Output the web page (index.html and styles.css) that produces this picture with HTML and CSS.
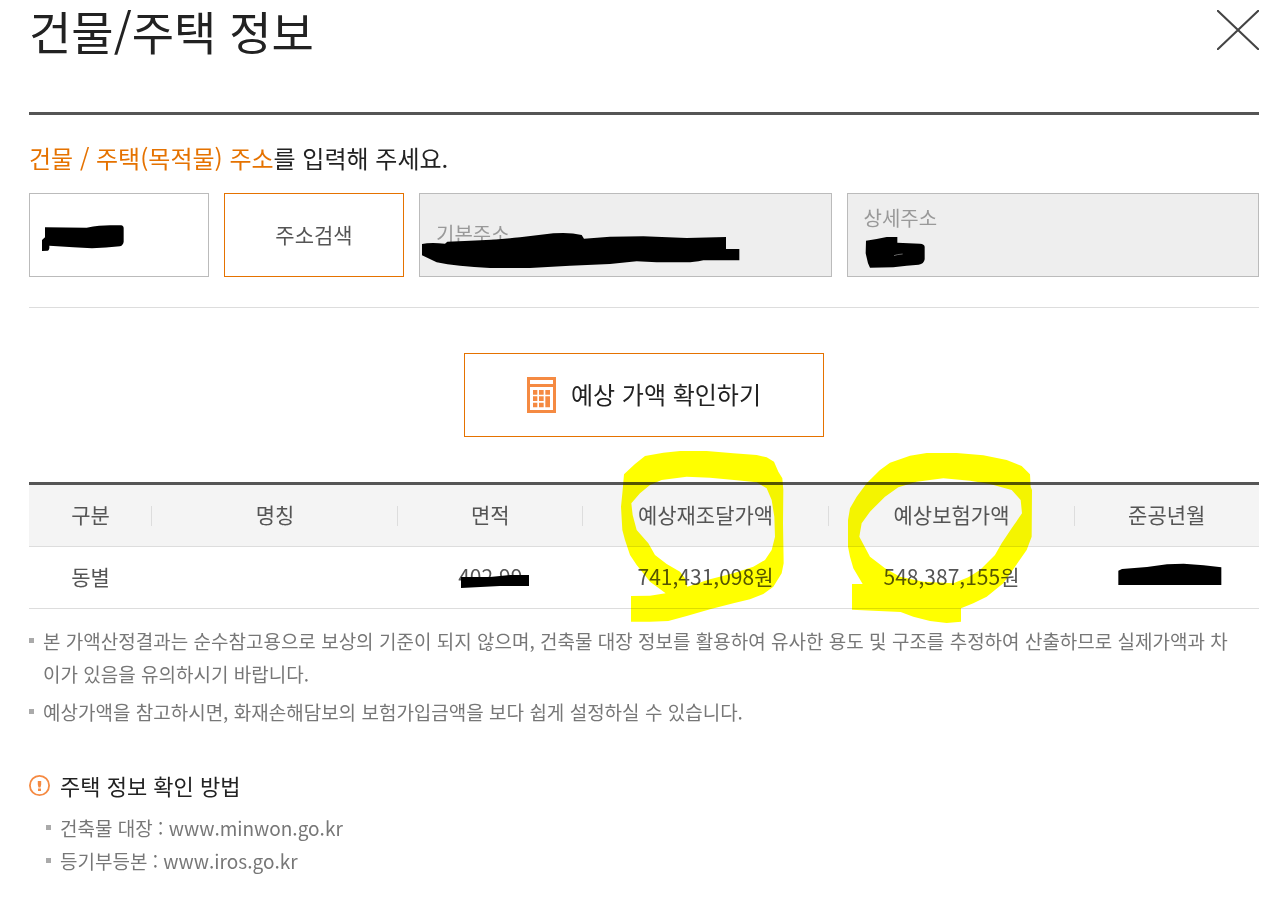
FILE: index.html
```html
<!DOCTYPE html>
<html lang="ko">
<head>
    <meta charset="UTF-8" />
    <title>건물/주택 정보</title>
    <meta name="viewport" content="width=device-width, initial-scale=1.0" />
    <link rel="stylesheet" href="styles.css">
</head>

<body>
    <header class="pop-header">
        <h1>건물/주택 정보</h1>
        <button type="button" class="btn-close" aria-label="닫기">
            <svg width="42" height="40" viewBox="0 0 42 40"><path d="M0 0L42 40M42 0L0 40" stroke="#444" stroke-width="2" /></svg>
        </button>
    </header>

    <main>
        <!-- Address form -->
        <form class="address">
            <h2><em>건물 / 주택(목적물) 주소</em>를 입력해 주세요.</h2>
            <div class="fields">
                <div class="field zip">
                    <input type="text" aria-label="우편번호">
                    <svg class="mask mask-zip" viewBox="120 669 258 90"><path d="M135 682L260 683Q300 676 330 676H363Q371 677 371 685V725Q370 735 360 739Q290 748 220 742L148 737Q149 751 143 752L126 753V720L135 712Z" /></svg>
                </div>
                <button type="button" class="btn-search">주소검색</button>
                <div class="field addr">
                    <input type="text" id="addr1" readonly>
                    <label for="addr1" class="label-mid">기본주소</label>
                    <svg class="mask mask-addr" viewBox="30 150 966 120"><path d="M36 192Q60 187 105 191L112 185Q240 182 330 172L430 160Q480 156 515 165L522 176L600 170L700 169L830 174L948 171V207H988V241H880Q850 247 830 247H740L680 244L600 252L480 257L360 264H240Q140 260 80 247L36 226Z" /></svg>
                </div>
                <div class="field addr">
                    <input type="text" id="addr2" readonly>
                    <label for="addr2" class="label-top">상세주소</label>
                    <svg class="mask mask-detail" viewBox="69 165 192 105"><path d="M78 182L110 177L140 171H172V188L240 191Q253 192 254 200V238Q252 252 236 254L200 257L160 262L90 263L84 250L77 220Z" /><path d="M162 227L172 224L188 222" fill="none" stroke="#999" stroke-width="2" /></svg>
                </div>
            </div>
        </form>

        <button type="button" class="btn-price">
            <svg width="29" height="36" viewBox="0 0 87 108">
                <path fill="#f58a42" d="M0 0H87V108H0Z" />
                <path fill="#fff" d="M9 9H78V21H9ZM9 30H78V99H9Z" />
                <path fill="#f58a42" d="M18 39h13v14H18zM36 39h14v14H36zM55 39h14v14H55zM18 58h13v14H18zM36 58h14v14H36zM18 77h13v14H18zM36 77h14v14H36zM55 58h14v33H55z" />
            </svg>
            <span>예상 가액 확인하기</span>
        </button>

        <!-- Result -->
        <table class="result">
            <colgroup>
                <col class="w10"><col class="w20"><col class="w15"><col class="w20"><col class="w20"><col class="w15">
            </colgroup>
            <thead>
                <tr>
                    <th scope="col">구분</th>
                    <th scope="col">명칭</th>
                    <th scope="col">면적</th>
                    <th scope="col">예상재조달가액
                        <svg class="marker marker-rebuild" viewBox="0 0 660 570"><path d="M72 103L105 72L135 48L190 38L240 33H320L400 40L470 45L500 52L522 65L535 95L547 115L550 150L549 250L551 370L545 400L520 440L490 462L450 478L400 490L330 508L260 528L205 543L150 545H93V468L150 467L197 460L150 425L110 375L90 345L75 300L67 270L63 200L68 150ZM94 190L120 160L150 135L185 120L260 110L330 113L410 121L470 127L500 145L515 180L523 230L525 290L515 330L495 360L460 380L400 400L330 418L262 440L255 415L240 395L200 372L165 345L145 310L110 270L98 225Z" /></svg>
                    </th>
                    <th scope="col">예상보험가액
                        <svg class="marker marker-insure" viewBox="0 0 660 570"><path d="M110 130L150 90L180 68L240 47L290 39H380L460 46L530 60L575 78L600 103L602 140L606 150L605 290L590 330L555 380L520 430L470 470L430 490L393 505V545L350 549L300 543L250 530L212 516L130 512L66 509V432H98L70 385L60 350L54 320V240L60 205L80 170ZM88 290L95 250L120 215L165 170L205 142L260 125L340 115L420 122L480 132L545 150L572 180L576 220L545 265L515 310L495 345L450 390L415 412L370 430L280 425L210 410L165 385L120 350Z" /></svg>
                    </th>
                    <th scope="col">준공년월</th>
                </tr>
            </thead>
            <tbody>
                <tr>
                    <td>동별</td>
                    <td></td>
                    <td>402.99
                        <svg class="mask mask-area" viewBox="0 0 70 15"><path d="M1 3L30 3L50 1H69V12H40L1 14Z" /></svg>
                    </td>
                    <td>741,431,098원</td>
                    <td>548,387,155원</td>
                    <td>
                        <svg class="mask mask-date" viewBox="200 280 318 69"><path d="M204 303L215 298L290 292L350 284L400 282L460 287L513 293V346H204Z" /></svg>
                    </td>
                </tr>
            </tbody>
        </table>

        <ul class="notes">
            <li>본 가액산정결과는 순수참고용으로 보상의 기준이 되지 않으며, 건축물 대장 정보를 활용하여 유사한 용도 및 구조를 추정하여 산출하므로 실제가액과 차<br>이가 있음을 유의하시기 바랍니다.</li>
            <li>예상가액을 참고하시면, 화재손해담보의 보험가입금액을 보다 쉽게 설정하실 수 있습니다.</li>
        </ul>

        <!-- Where to look it up -->
        <section class="guide">
            <h3>
                <svg width="21" height="21" viewBox="0 0 21 21"><circle cx="10.500" cy="10.500" r="9.600" fill="none" stroke="#f58a42" stroke-width="1.800" /><path d="M8.800 6h3.400v3.500l-.7 3H9.500l-.7-3zM9 13.500h3v2.500H9z" fill="#f58a42" /></svg>
                주택 정보 확인 방법
            </h3>
            <ul>
                <li>건축물 대장 : www.minwon.go.kr</li>
                <li>등기부등본 : www.iros.go.kr</li>
            </ul>
        </section>
    </main>
</body>
</html>
```

FILE: styles.css
```css
* {
    box-sizing: border-box;
}

body {
    margin: 0;
    padding: 0 26px 32px 29px;
    background: #fff;
    color: #222;
    font-family: "Noto Sans CJK KR", sans-serif;
}

h1, h2, h3, ul {
    margin: 0;
    padding: 0;
    font-weight: normal;
}

ul {
    list-style: none;
}

button, input {
    font-family: inherit;
}

button {
    background: #fff;
    cursor: pointer;
}

/* --- Header --- */
.pop-header {
    display: flex;
    justify-content: space-between;
    align-items: flex-start;
    padding-bottom: 52px;
    border-bottom: 3px solid #555;
}

h1 {
    font-size: 46px;
    line-height: 60px;
}

.btn-close {
    margin-top: 10px;
    padding: 0;
    border: 0;
}

.btn-close svg {
    display: block;
}

/* --- Address form --- */
.address {
    padding: 24px 0 30px;
    border-bottom: 1px solid #ddd;
}

h2 {
    margin-bottom: 16px;
    font-size: 24px;
    line-height: 38px;
}

h2 em {
    color: #e57200;
    font-style: normal;
}

.fields {
    display: flex;
    gap: 15px;
}

.field {
    position: relative;
    height: 84px;
    border: 1px solid #bbb;
}

.field input {
    display: block;
    width: 100%;
    height: 100%;
    padding: 0 15px;
    border: 0;
    background: transparent;
    color: #555;
    font-size: 21px;
}

.zip,
.btn-search {
    flex: 0 0 180px;
}

.addr {
    flex: 1;
    background: #eee;
}

.field label {
    position: absolute;
    left: 16px;
    color: #999;
    font-size: 20px;
    line-height: 30px;
}

.label-top {
    top: 9px;
}

.label-mid {
    top: 25px;
}

.btn-search {
    padding-bottom: 4px;
    border: 1px solid #e57200;
    color: #555;
    font-size: 21px;
}

.btn-price {
    display: flex;
    align-items: center;
    justify-content: center;
    gap: 15px;
    width: 360px;
    height: 84px;
    margin: 45px auto;
    border: 1px solid #e57200;
    color: #222;
    font-size: 24px;
}

.btn-price span {
    padding-bottom: 4px;
}

/* --- Result table --- */
.result {
    width: 100%;
    table-layout: fixed;
    border-spacing: 0;
    border-top: 3px solid #555;
    color: #555;
    font-size: 21px;
    line-height: 31px;
}

.w10 { width: 10%; }
.w15 { width: 15%; }
.w20 { width: 20%; }

.result th,
.result td {
    position: relative;
    height: 62px;
    padding: 0 0 2px;
    border-bottom: 1px solid #ddd;
    font-weight: normal;
    text-align: center;
}

.result th {
    background: #f4f4f4 linear-gradient(#ddd, #ddd) no-repeat right center / 1px 20px;
}

.result th:last-child {
    background: #f4f4f4;
}

/* --- Pen strokes --- */
.mask,
.marker {
    position: absolute;
    pointer-events: none;
}

.marker {
    z-index: 1;
    top: -45px;
    width: 220px;
    height: 190px;
    fill: #ff0;
    fill-rule: evenodd;
    mix-blend-mode: multiply;
}

.marker-rebuild { left: calc(50% - 106px); }
.marker-insure { left: calc(50% - 122px); }

.mask-zip {
    top: 29px;
    left: 10px;
    width: 86px;
}

.mask-addr {
    top: 36px;
    left: 0;
    width: 322px;
}

.mask-detail {
    top: 41px;
    left: 15px;
    width: 64px;
}

.mask-area {
    top: 27px;
    left: calc(50% - 30px);
    width: 70px;
}

.mask-date {
    top: 16px;
    left: calc(50% - 50px);
    width: 106px;
}

/* --- Notes --- */
.notes {
    padding-top: 15px;
}

.notes li,
.guide li {
    position: relative;
    padding-left: 14px;
    color: #777;
    font-size: 19px;
    line-height: 33px;
}

.notes li + li {
    margin-top: 5px;
}

.notes li::before,
.guide li::before {
    content: "";
    position: absolute;
    top: 14px;
    left: 0;
    width: 5px;
    height: 5px;
    background: #aaa;
}

.guide {
    padding-top: 39px;
}

h3 {
    display: flex;
    align-items: center;
    gap: 10px;
    margin-bottom: 8px;
    font-size: 22px;
    line-height: 36px;
}

.guide ul {
    padding-left: 17px;
}
```
